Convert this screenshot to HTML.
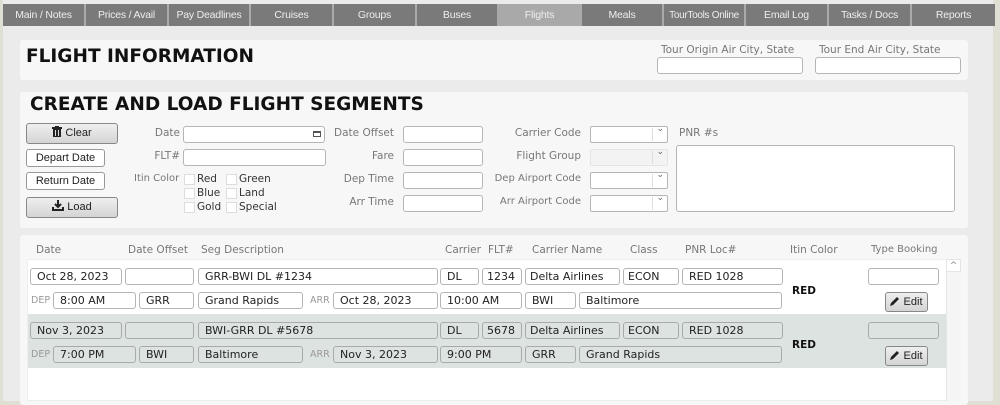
<!DOCTYPE html>
<html><head><style>
*{box-sizing:border-box;margin:0;padding:0}
body{width:1000px;height:401px;overflow:hidden;background:#dfdfd3;font-family:"DejaVu Sans",Verdana,sans-serif;font-size:10.5px;color:#777;position:relative}
#pg{position:absolute;left:3px;top:0;width:990px;height:401px;background:#ebebeb}
.a{position:absolute}
.tab{position:absolute;top:4px;height:22px;background:#7a7a7a;color:#eee;font-family:"Liberation Sans",Arial,sans-serif;font-size:10.5px;text-align:center;line-height:23px;border-right:2px solid #aaa;white-space:nowrap;overflow:hidden;letter-spacing:-0.2px}
.pan{position:absolute;background:#f7f7f7;border-radius:3px}
.in{position:absolute;height:17px;background:#fff;border:1px solid #b5b5b5;border-radius:3px;color:#222;font-size:11px;line-height:16px;padding-left:6px;white-space:nowrap;overflow:hidden}
.g .in{background:#dde3e0;border-color:#a8aca9}
.lb{position:absolute;font-size:10.5px;color:#777;white-space:nowrap}
.r{text-align:right}
.btn{position:absolute;border:1px solid #888;border-radius:3px;background:linear-gradient(#efefef,#d4d4d4);font-family:"Liberation Sans",Arial,sans-serif;font-size:11px;color:#222;text-align:center}
.wb{background:#fff;border-color:#999}
.cb{position:absolute;width:11px;height:11px;border:1px solid #ddd;background:#fff}
.sel{position:absolute;height:17px;background:#fff;border:1px solid #b5b5b5;border-radius:2px}
.sel:after{content:"⌄";position:absolute;right:3px;top:-3px;font-size:9px;color:#666}
.sel::before{content:"";position:absolute;right:14px;top:1px;height:13px;border-left:1px solid #ddd}
.h{position:absolute;top:244px;font-size:10.5px;color:#777}
.cl{color:#333}
</style></head><body>
<div id="pg"></div>
<div class="tab" style="left:3px;width:83px">Main / Notes</div>
<div class="tab" style="left:86px;width:83px">Prices / Avail</div>
<div class="tab" style="left:169px;width:82px">Pay Deadlines</div>
<div class="tab" style="left:251px;width:83px">Cruises</div>
<div class="tab" style="left:334px;width:83px">Groups</div>
<div class="tab" style="left:417px;width:82px">Buses</div>
<div class="tab" style="left:499px;width:83px;background:#a9a9a9">Flights</div>
<div class="tab" style="left:582px;width:82px">Meals</div>
<div class="tab" style="left:664px;width:82px;font-size:10px;letter-spacing:-0.3px">TourTools Online</div>
<div class="tab" style="left:746px;width:83px">Email Log</div>
<div class="tab" style="left:829px;width:83px">Tasks / Docs</div>
<div class="tab" style="left:912px;width:83px;border-right:0">Reports</div>

<div class="pan" style="left:20px;top:40px;width:948px;height:40px"></div>
<div class="a" style="left:26px;top:46px;font-size:18.5px;font-weight:bold;color:#111">FLIGHT INFORMATION</div>
<div class="lb" style="left:661px;top:44px">Tour Origin Air City, State</div>
<div class="in" style="left:657px;top:57px;width:146px"></div>
<div class="lb" style="left:819px;top:44px">Tour End Air City, State</div>
<div class="in" style="left:815px;top:57px;width:146px"></div>

<div class="pan" style="left:20px;top:92px;width:948px;height:136px"></div>
<div class="a" style="left:30px;top:94px;font-size:18.5px;font-weight:bold;color:#111">CREATE AND LOAD FLIGHT SEGMENTS</div>
<div class="btn" style="left:26px;top:123px;width:92px;height:21px;line-height:19px"><svg width="10" height="11" viewBox="0 0 10 11" style="vertical-align:-1px"><rect x="0" y="1" width="10" height="2" fill="#222"/><rect x="3" y="0" width="4" height="1" fill="#222"/><rect x="1" y="3" width="8" height="8" fill="#222"/><rect x="3" y="4" width="1" height="6" fill="#ddd"/><rect x="6" y="4" width="1" height="6" fill="#ddd"/></svg> Clear</div>
<div class="btn wb" style="left:26px;top:149px;width:79px;height:18px;line-height:16px">Depart Date</div>
<div class="btn wb" style="left:26px;top:172px;width:79px;height:18px;line-height:16px">Return Date</div>
<div class="btn" style="left:26px;top:197px;width:92px;height:21px;line-height:19px"><svg width="12" height="11" viewBox="0 0 12 11" style="vertical-align:-1px"><path d="M6 0v6M3 4l3 3 3-3" stroke="#222" stroke-width="2" fill="none"/><path d="M1 7v3h10V7" stroke="#222" stroke-width="2" fill="none"/></svg> Load</div>

<div class="lb r" style="left:120px;width:60px;top:127px">Date</div>
<div class="in" style="left:183px;top:126px;width:142px"></div>
<div class="a" style="left:313px;top:131px;width:8px;height:6px;border:1px solid #555;border-top-width:2px"></div>
<div class="lb r" style="left:120px;width:60px;top:150px">FLT#</div>
<div class="in" style="left:183px;top:149px;width:143px"></div>
<div class="lb" style="left:134px;top:173px;font-size:10px">Itin Color</div>
<div class="cb" style="left:184px;top:174px"></div><div class="lb cl" style="left:197px;top:173px">Red</div>
<div class="cb" style="left:226px;top:174px"></div><div class="lb cl" style="left:239px;top:173px">Green</div>
<div class="cb" style="left:184px;top:188px"></div><div class="lb cl" style="left:197px;top:187px">Blue</div>
<div class="cb" style="left:226px;top:188px"></div><div class="lb cl" style="left:239px;top:187px">Land</div>
<div class="cb" style="left:184px;top:202px"></div><div class="lb cl" style="left:197px;top:201px">Gold</div>
<div class="cb" style="left:226px;top:202px"></div><div class="lb cl" style="left:239px;top:201px">Special</div>

<div class="lb r" style="left:300px;width:94px;top:127px">Date Offset</div>
<div class="lb r" style="left:300px;width:94px;top:150px">Fare</div>
<div class="lb r" style="left:300px;width:94px;top:173px">Dep Time</div>
<div class="lb r" style="left:300px;width:94px;top:196px">Arr Time</div>
<div class="in" style="left:403px;top:126px;width:80px"></div>
<div class="in" style="left:403px;top:149px;width:80px"></div>
<div class="in" style="left:403px;top:172px;width:80px"></div>
<div class="in" style="left:403px;top:195px;width:80px"></div>

<div class="lb r" style="left:470px;width:111px;top:127px">Carrier Code</div>
<div class="lb r" style="left:470px;width:111px;top:150px">Flight Group</div>
<div class="lb r" style="left:470px;width:111px;top:173px;font-size:10px">Dep Airport Code</div>
<div class="lb r" style="left:470px;width:111px;top:196px;font-size:10px">Arr Airport Code</div>
<div class="sel" style="left:590px;top:126px;width:78px"></div>
<div class="sel" style="left:590px;top:149px;width:78px;background:#f3f3f3;border-color:#e5e5e5"></div>
<div class="sel" style="left:590px;top:172px;width:78px"></div>
<div class="sel" style="left:590px;top:195px;width:78px"></div>
<div class="lb" style="left:679px;top:127px">PNR #s</div>
<div class="in" style="left:676px;top:145px;width:279px;height:67px"></div>

<div class="pan" style="left:20px;top:235px;width:948px;height:170px"></div>
<div class="h" style="left:36px">Date</div>
<div class="h" style="left:128px">Date Offset</div>
<div class="h" style="left:201px">Seg Description</div>
<div class="h" style="left:445px">Carrier</div>
<div class="h" style="left:488px">FLT#</div>
<div class="h" style="left:532px">Carrier Name</div>
<div class="h" style="left:630px">Class</div>
<div class="h" style="left:685px">PNR Loc#</div>
<div class="h" style="left:790px">Itin Color</div>
<div class="h" style="left:871px;font-size:10px">Type Booking</div>
<div class="a" style="left:27px;top:259px;width:934px;height:142px;background:#fff;border:1px solid #eee"></div>
<div class="a" style="left:946px;top:259px;width:15px;height:142px;background:#f5f5f5;border-left:1px solid #e5e5e5"></div>
<div class="a" style="left:946px;top:259px;width:15px;height:13px;background:#fff;border:1px solid #e5e5e5;font-size:9px;text-align:center;line-height:12px;color:#888">^</div>
<div class="a" style="left:28px;top:314px;width:918px;height:54px;background:#dde3e0"></div>

<div>
<div class="in" style="left:30px;top:268px;width:92px">Oct 28, 2023</div>
<div class="in" style="left:125px;top:268px;width:69px"></div>
<div class="in" style="left:198px;top:268px;width:240px">GRR-BWI DL #1234</div>
<div class="in" style="left:440px;top:268px;width:39px">DL</div>
<div class="in" style="left:482px;top:268px;width:40px;padding-left:4px">1234</div>
<div class="in" style="left:525px;top:268px;width:95px;padding-left:4px">Delta Airlines</div>
<div class="in" style="left:623px;top:268px;width:56px;padding-left:4px">ECON</div>
<div class="in" style="left:682px;top:268px;width:101px">RED 1028</div>
<div class="lb" style="left:31px;top:295px;color:#999;font-size:9.5px">DEP</div>
<div class="in" style="left:53px;top:292px;width:83px">8:00 AM</div>
<div class="in" style="left:139px;top:292px;width:55px">GRR</div>
<div class="in" style="left:198px;top:292px;width:105px">Grand Rapids</div>
<div class="lb" style="left:310px;top:295px;color:#999;font-size:9.5px">ARR</div>
<div class="in" style="left:333px;top:292px;width:105px">Oct 28, 2023</div>
<div class="in" style="left:440px;top:292px;width:82px">10:00 AM</div>
<div class="in" style="left:525px;top:292px;width:51px">BWI</div>
<div class="in" style="left:579px;top:292px;width:203px">Baltimore</div>
<div class="a" style="left:792px;top:285px;font-weight:bold;color:#111;font-size:10.5px">RED</div>
<div class="in" style="left:868px;top:268px;width:71px"></div>
<div class="btn" style="left:885px;top:292px;width:43px;height:20px;line-height:18px"><svg width="10" height="10" viewBox="0 0 10 10" style="vertical-align:-1px"><path d="M0 10l1-3 6-6 2 2-6 6z" fill="#222"/></svg> Edit</div>
</div>
<div class="g">
<div class="in" style="left:30px;top:322px;width:92px">Nov 3, 2023</div>
<div class="in" style="left:125px;top:322px;width:69px"></div>
<div class="in" style="left:198px;top:322px;width:240px">BWI-GRR DL #5678</div>
<div class="in" style="left:440px;top:322px;width:39px">DL</div>
<div class="in" style="left:482px;top:322px;width:40px;padding-left:4px">5678</div>
<div class="in" style="left:525px;top:322px;width:95px;padding-left:4px">Delta Airlines</div>
<div class="in" style="left:623px;top:322px;width:56px;padding-left:4px">ECON</div>
<div class="in" style="left:682px;top:322px;width:101px">RED 1028</div>
<div class="lb" style="left:31px;top:349px;color:#999;font-size:9.5px">DEP</div>
<div class="in" style="left:53px;top:346px;width:83px">7:00 PM</div>
<div class="in" style="left:139px;top:346px;width:55px">BWI</div>
<div class="in" style="left:198px;top:346px;width:105px">Baltimore</div>
<div class="lb" style="left:310px;top:349px;color:#999;font-size:9.5px">ARR</div>
<div class="in" style="left:333px;top:346px;width:105px">Nov 3, 2023</div>
<div class="in" style="left:440px;top:346px;width:82px">9:00 PM</div>
<div class="in" style="left:525px;top:346px;width:51px">GRR</div>
<div class="in" style="left:579px;top:346px;width:203px">Grand Rapids</div>
<div class="a" style="left:792px;top:339px;font-weight:bold;color:#111;font-size:10.5px">RED</div>
<div class="in" style="left:868px;top:322px;width:71px"></div>
<div class="btn" style="left:885px;top:346px;width:43px;height:20px;line-height:18px"><svg width="10" height="10" viewBox="0 0 10 10" style="vertical-align:-1px"><path d="M0 10l1-3 6-6 2 2-6 6z" fill="#222"/></svg> Edit</div>
</div>
</body></html>
